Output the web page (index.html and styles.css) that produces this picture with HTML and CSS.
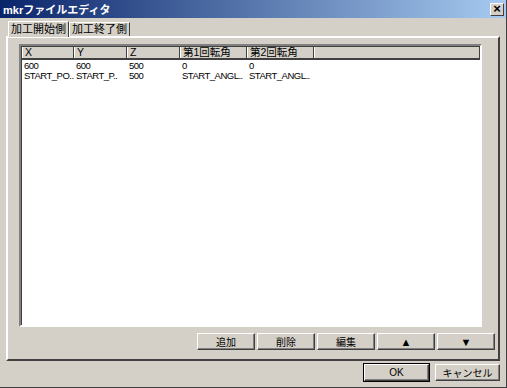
FILE: index.html
```html
<!DOCTYPE html>
<html lang="ja">
<head>
    <meta charset="UTF-8">
    <title>mkrファイルエディタ</title>
    <link rel="stylesheet" href="styles.css">
</head>
<body>
    <div class="window">
        <div class="titlebar">
            <span class="title">mkrファイルエディタ</span>
            <span class="close">×</span>
        </div>

        <div class="tabs">
            <div class="tab active">加工開始側</div>
            <div class="tab">加工終了側</div>
        </div>

        <div class="panel">
            <div class="list">
                <div class="head">
                    <div class="hcell c1">X</div>
                    <div class="hcell c2">Y</div>
                    <div class="hcell c3">Z</div>
                    <div class="hcell c4">第1回転角</div>
                    <div class="hcell c5">第2回転角</div>
                    <div class="hcell rest"></div>
                </div>
                <div class="rows">
                    <div class="row">
                        <div class="cell c1">600</div>
                        <div class="cell c2">600</div>
                        <div class="cell c3">500</div>
                        <div class="cell c4">0</div>
                        <div class="cell c5">0</div>
                    </div>
                    <div class="row">
                        <div class="cell c1">START_PO..</div>
                        <div class="cell c2">START_P..</div>
                        <div class="cell c3">500</div>
                        <div class="cell c4">START_ANGL..</div>
                        <div class="cell c5">START_ANGL..</div>
                    </div>
                </div>
            </div>
            <div class="tools">
                <button class="btn">追加</button>
                <button class="btn">削除</button>
                <button class="btn">編集</button>
                <button class="btn arrow">▲</button>
                <button class="btn arrow">▼</button>
            </div>
        </div>

        <div class="footer">
            <button class="btn wide default">OK</button>
            <button class="btn wide">キャンセル</button>
        </div>
    </div>
</body>
</html>
```

FILE: styles.css
```css
body {
    margin: 0;
    padding: 0;
    font-family: "Liberation Sans", "Noto Sans CJK JP", sans-serif;
    font-size: 10px;
    background: #d4d0c8;
}
.window {
    width: 506px;
    height: 387px;
    background: #d4d0c8;
    border-right: 1px solid #404040;
    border-bottom: 1px solid #404040;
    display: flex;
    flex-direction: column;
    overflow: hidden;
}
.titlebar {
    height: 18px;
    flex-shrink: 0;
    background: linear-gradient(to right, #0a246a, #a6caf0);
    display: flex;
    align-items: center;
    justify-content: space-between;
    padding: 0 2px 0 3px;
}
.title {
    color: #fff;
    font-weight: bold;
    font-size: 11px;
}
.close {
    width: 12px;
    height: 11px;
    background: #d4d0c8;
    border: 1px solid;
    border-color: #fff #404040 #404040 #fff;
    font-size: 13px;
    font-weight: bold;
    line-height: 10px;
    text-align: center;
    color: #000;
}
.tabs {
    display: flex;
    align-items: flex-end;
    padding-left: 8px;
    margin-top: 2px;
    height: 16px;
    flex-shrink: 0;
}
.tab {
    font-size: 11px;
    height: 13px;
    line-height: 13px;
    padding: 0 2px;
    border: 1px solid;
    border-color: #fff #404040 transparent #fff;
    border-bottom: none;
    background: #d4d0c8;
}
.tab.active {
    height: 15px;
    line-height: 15px;
    margin-bottom: -1px;
    position: relative;
    z-index: 1;
}
.panel {
    box-sizing: border-box;
    margin: 0 6px;
    height: 325px;
    flex-shrink: 0;
    border: 2px solid;
    border-color: #fff #404040 #404040 #fff;
    padding: 6px 3px 0 11px;
    display: flex;
    flex-direction: column;
}
.list {
    box-sizing: border-box;
    width: 463px;
    height: 283px;
    background: #fff;
    border: 2px solid;
    border-color: #808080 #fff #fff #808080;
    box-shadow: inset 1px 1px 0 #404040;
}
.head {
    display: flex;
    height: 11px;
    margin-left: 1px;
    background: #d4d0c8;
    border-top: 1px solid #404040;
    border-bottom: 2px solid #404040;
}
.hcell {
    box-sizing: border-box;
    height: 11px;
    line-height: 11px;
    padding-left: 2px;
    border-left: 1px solid #fff;
    border-right: 1px solid #404040;
    font-size: 10.5px;
}
.c1 { width: 52px; }
.c2 { width: 53px; }
.c3 { width: 53px; }
.c4 { width: 67px; }
.c5 { width: 67px; }
.rest { flex: 1; }
.rows {
    margin: 1px 0 0 1px;
}
.row {
    display: flex;
    height: 10px;
    line-height: 10px;
}
.cell {
    box-sizing: border-box;
    padding-left: 2px;
    font-size: 9.5px;
    letter-spacing: -0.5px;
    white-space: nowrap;
}
.tools {
    display: flex;
    justify-content: flex-end;
    gap: 2px;
    margin-top: 6px;
}
.btn {
    width: 58px;
    height: 17px;
    padding: 0;
    background: #d4d0c8;
    font-family: "Liberation Sans", "Noto Sans CJK JP", sans-serif;
    font-size: 10px;
    border: 1px solid;
    border-color: #fff #404040 #404040 #fff;
    box-shadow: inset -1px -1px 0 #808080;
    color: #000;
}
.btn.arrow {
    font-size: 11px;
}
.footer {
    display: flex;
    justify-content: flex-end;
    gap: 6px;
    padding: 3px 6px 0 0;
}
.btn.wide {
    width: 65px;
}
.btn.default {
    outline: 1px solid #000;
}
```
